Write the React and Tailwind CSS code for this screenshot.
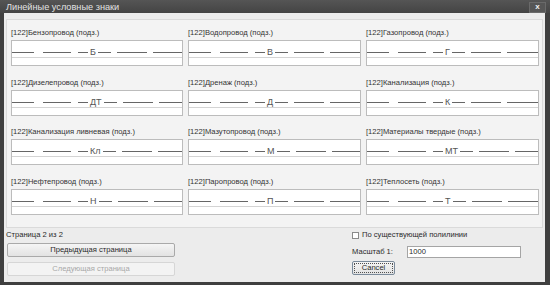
import React from 'react'

const ITEMS = [
  { name: 'Бензопровод', code: 'Б' },
  { name: 'Водопровод', code: 'В' },
  { name: 'Газопровод', code: 'Г' },
  { name: 'Дизелепровод', code: 'ДТ' },
  { name: 'Дренаж', code: 'Д' },
  { name: 'Канализация', code: 'К' },
  { name: 'Канализация ливневая', code: 'Кл' },
  { name: 'Мазутопровод', code: 'М' },
  { name: 'Материалы твердые', code: 'МТ' },
  { name: 'Нефтепровод', code: 'Н' },
  { name: 'Паропровод', code: 'П' },
  { name: 'Теплосеть', code: 'Т' },
]

function Dash({ w }) {
  return <span className={`h-px bg-[#666666] shrink-0 ${w}`} />
}

function LineCell({ name, code }) {
  return (
    <div className="flex flex-col h-[38px]">
      <div className="h-[10px] leading-[10px] text-[7.6px] text-[#333333] whitespace-nowrap">
        [122]{name} (подз.)
      </div>
      <div className="mt-[2px] h-[26px] border border-[#bcbcbc] bg-white flex flex-col">
        <div className="h-[17px] border-b border-[#d4d4d4] flex items-end">
          <div className="flex items-center w-full h-[9px]">
            <Dash w="w-[22px]" />
            <span className="w-[9px] shrink-0" />
            <Dash w="w-[28px]" />
            <span className="w-[7px] shrink-0" />
            <Dash w="w-[10px]" />
            <span className="text-[9px] leading-[9px] text-[#555555] px-[2px]">{code}</span>
            <Dash w="w-[13px]" />
            <span className="w-[6px] shrink-0" />
            <Dash w="w-[30px]" />
            <span className="w-[6px] shrink-0" />
            <span className="h-px bg-[#666666] flex-1" />
          </div>
        </div>
      </div>
    </div>
  )
}

export default function App() {
  return (
    <div
      className="w-[550px] h-[285px] bg-[#3f3f3f] flex flex-col overflow-hidden"
      style={{ fontFamily: '"Liberation Sans", Arial, sans-serif' }}
    >
      {/* Title bar */}
      <div className="h-[13px] flex items-center justify-between pl-[6px] pr-[4px] bg-gradient-to-b from-[#555555] to-[#444444]">
        <span className="text-[9.2px] leading-[12px] text-[#e2e2e2]">Линейные условные знаки</span>
        <button className="w-[17px] h-[11px] mt-[1px] bg-[#565656] border border-[#6a6a6a] flex items-center justify-center text-[8px] font-bold leading-none text-[#f0f0f0]">
          x
        </button>
      </div>

      {/* Body */}
      <div className="flex-1 ml-[4px] mr-[5px] mb-[3px] bg-[#ececec] flex flex-col">
        <div className="mt-[6px] ml-[2px] mr-[2px] h-[209px] border border-[#dadada] bg-[#f3f3f3] pt-[8px] pl-[4px] pr-[3px]">
          <div className="grid grid-cols-[172px_173px_173px] gap-x-[5px] gap-y-[11.6px]">
            {ITEMS.map(it => (
              <LineCell key={it.name} {...it} />
            ))}
          </div>
        </div>

        {/* Bottom controls */}
        <div className="flex mt-[2px]">
          <div className="ml-[2px] w-[169px] flex flex-col">
            <span className="text-[7.6px] leading-[10px] text-[#2a2a2a]">Страница 2 из 2</span>
            <button className="mt-[3px] ml-px h-[14px] rounded-[2px] border border-[#a9a9a9] bg-gradient-to-b from-[#f5f5f5] to-[#e2e2e2] text-[7.6px] text-[#2a2a2a] leading-none">
              Предыдущая страница
            </button>
            <button className="mt-[5px] ml-px h-[14px] rounded-[2px] border border-[#d6d6d6] bg-[#f3f3f3] text-[7.6px] text-[#a8a8a8] leading-none">
              Следующая страница
            </button>
          </div>

          <div className="ml-[177px] flex flex-col">
            <label className="flex items-center gap-[3px] h-[10px]">
              <span className="w-[7px] h-[7px] border border-[#8a8a8a] bg-white" />
              <span className="text-[7.6px] text-[#2a2a2a] leading-none">По существующей полилинии</span>
            </label>
            <div className="flex items-center mt-[6px]">
              <span className="w-[55px] text-[7.6px] text-[#2a2a2a] leading-none">Масштаб 1:</span>
              <div className="w-[114px] h-[12px] border border-[#a5a5a5] bg-white text-[7.6px] leading-[10px] pl-px text-[#2a2a2a]">
                1000
              </div>
            </div>
            <button className="mt-[3px] w-[43px] h-[14px] rounded-[2px] border border-[#7a8a9a] bg-gradient-to-b from-[#f5f5f5] to-[#e2e2e2] p-[1px]">
              <span className="flex items-center justify-center w-full h-full border border-dotted border-[#505050] text-[7.6px] text-[#2a2a2a] leading-none">
                Cancel
              </span>
            </button>
          </div>
        </div>
      </div>
    </div>
  )
}
